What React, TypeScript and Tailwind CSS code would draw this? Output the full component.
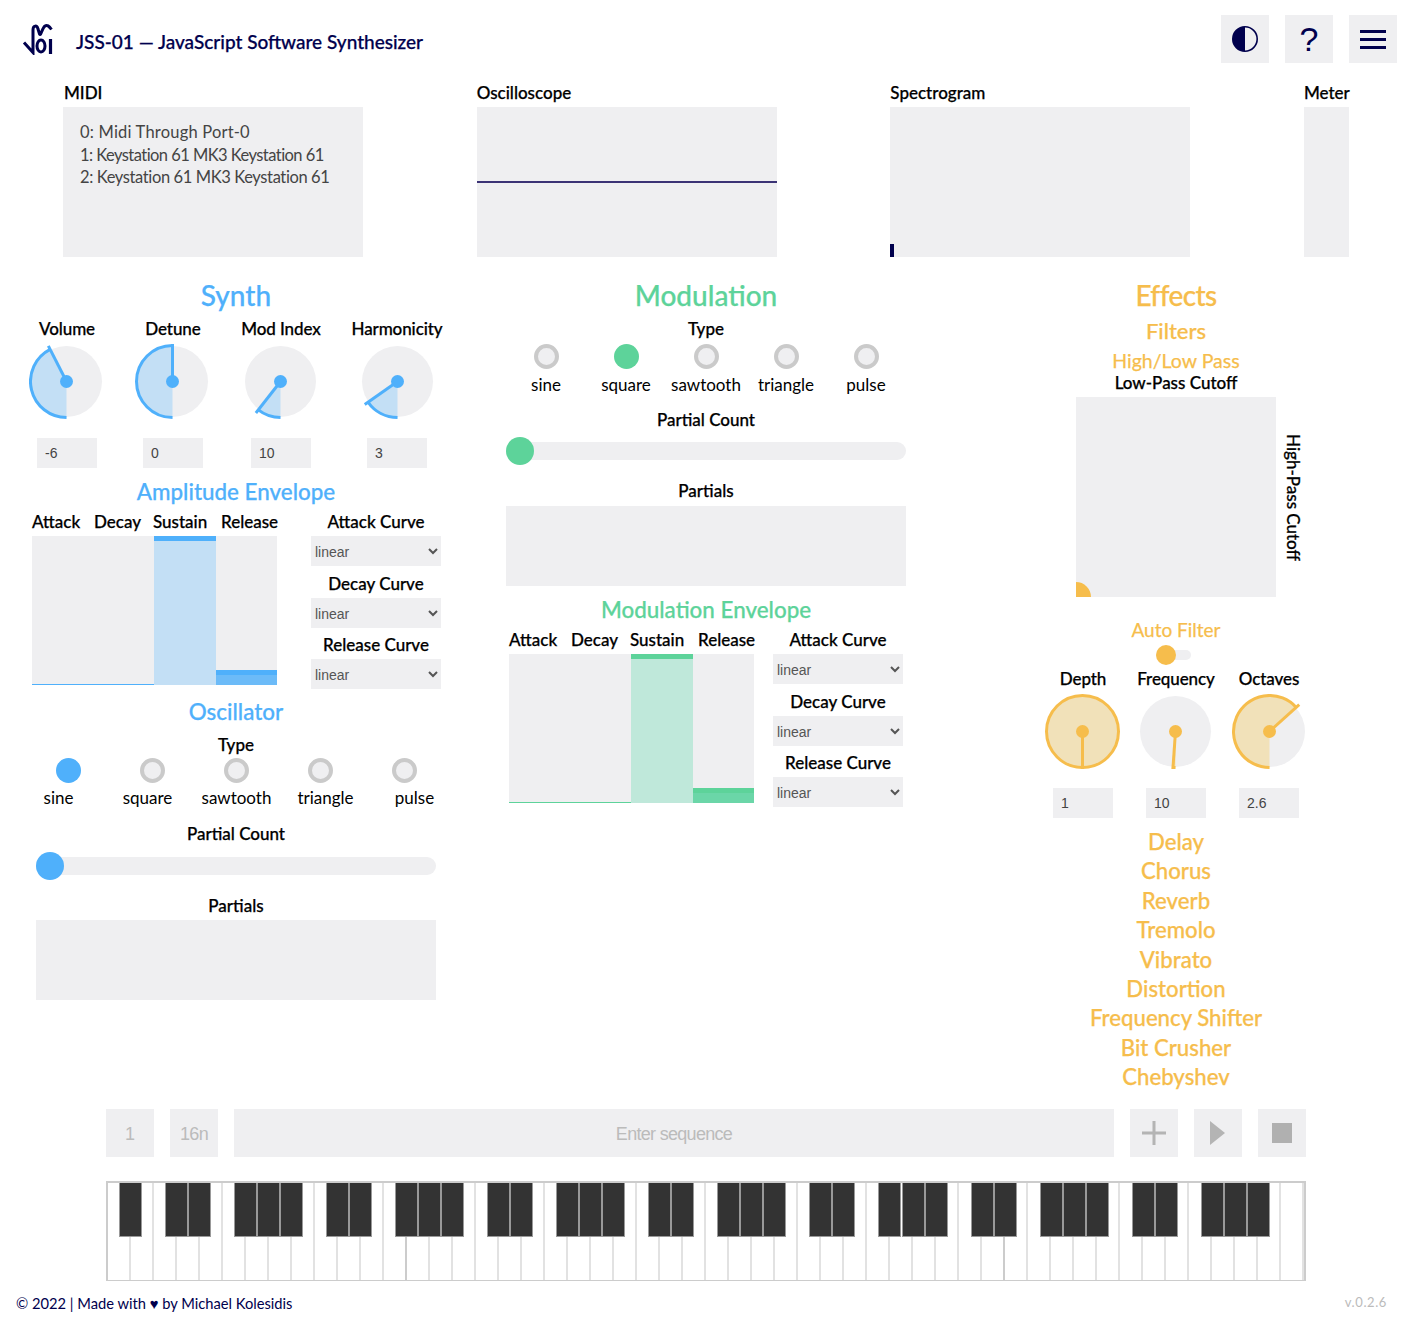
import React from "react";

const BLUE = { main: "#4fb0fb", light: "#c3dff5" };
const GREEN = { main: "#5dd39a", light: "#bfe8da" };
const ORANGE = { main: "#f6bd4c", light: "#f1e1b9" };
type C = typeof BLUE;

function Knob({ angle, c, nudge }: { angle: number; c: C; nudge: boolean }) {
  const R = 36, cx = 37.5, cy = 37.5;
  const a = (angle * Math.PI) / 180;
  const ex = cx - Math.sin(a) * R;
  const ey = cy + Math.cos(a) * R;
  const px = cx - Math.sin(a) * 40;
  const py = cy + Math.cos(a) * 40;
  const full = angle >= 360;
  const large = angle > 180 ? 1 : 0;
  const arc = `M ${cx} ${cy + R} A ${R} ${R} 0 ${large} 1 ${ex} ${ey}`;
  return (
    <svg width="75" height="75" viewBox="0 0 75 75" className={nudge ? "block -ml-[1px]" : "block ml-[1px]"}>
      <circle cx={cx} cy={cy} r="35.5" fill="#efeff1" />
      {full ? (
        <circle cx={cx} cy={cy} r={R} fill={c.light} stroke={c.main} strokeWidth="3" />
      ) : (
        <>
          <path d={`M ${cx} ${cy} L ${cx} ${cy + R} A ${R} ${R} 0 ${large} 1 ${ex} ${ey} Z`} fill={c.light} />
          <path d={arc} fill="none" stroke={c.main} strokeWidth="3" />
        </>
      )}
      <line x1={cx} y1={cy} x2={px} y2={py} stroke={c.main} strokeWidth="3" />
      <circle cx={cx} cy={cy} r="6.5" fill={c.main} />
    </svg>
  );
}

function NumInput({ v }: { v: string }) {
  return (
    <input
      readOnly
      value={v}
      className="block w-[60px] h-[30px] bg-[#efeff1] pl-[8px] text-[14px] text-[#444] font-['Liberation_Sans',sans-serif] outline-none [-webkit-text-stroke:0]"
    />
  );
}

function KnobCol({ label, value, angle, c, w, labelH = "h-[30px]", nudge = true }: { label: string; value: string; angle: number; c: C; w: string; labelH?: string; nudge?: boolean }) {
  return (
    <div className={`${w} flex flex-col items-center`}>
      <div className={`${labelH} flex items-center whitespace-nowrap text-[17px] font-medium tracking-[-0.1px]`}>{label}</div>
      <Knob angle={angle} c={c} nudge={nudge} />
      <div className="mt-[19px]">
        <NumInput v={value} />
      </div>
    </div>
  );
}

function Sel() {
  return (
    <select className="block w-[130px] h-[30px] pt-[1px] bg-[#efeff1] text-[14px] text-[#555] font-['Liberation_Sans',sans-serif] outline-none [-webkit-text-stroke:0]">
      <option>linear</option>
    </select>
  );
}

function Envelope({ c, mid, left, gap }: { c: C; mid: string; left: string; gap: string }) {
  return (
    <div className={`flex ${left} ${gap}`}>
      <div className="w-[245px]">
        <div className="h-[28px] flex items-center whitespace-nowrap text-[17px] font-medium">
          <div className="w-[47px] text-center">Attack</div>
          <div className="w-[45px] ml-[15px] text-center">Decay</div>
          <div className="w-[53px] ml-[14px] text-center">Sustain</div>
          <div className="w-[56px] ml-[15px] text-center">Release</div>
        </div>
        <div className="flex h-[149px] bg-[#efeff1]">
          <div className="w-[122px] flex flex-col justify-end">
            <div className="h-[1px]" style={{ background: c.main }} />
          </div>
          <div className="w-[62px]" style={{ background: c.light }}>
            <div className="h-[5px]" style={{ background: c.main }} />
          </div>
          <div className="w-[61px] flex flex-col justify-end">
            <div className="h-[5px]" style={{ background: c.main }} />
            <div className="h-[10px]" style={{ background: mid }} />
          </div>
        </div>
      </div>
      <div className="w-[130px] text-[17px] font-medium text-center">
        <div className="h-[28px] flex items-center justify-center">Attack Curve</div>
        <Sel />
        <div className="h-[28px] mt-[4px] flex items-center justify-center">Decay Curve</div>
        <Sel />
        <div className="h-[28px] mt-[3px] flex items-center justify-center">Release Curve</div>
        <Sel />
      </div>
    </div>
  );
}

function Radio({ on, c }: { on: boolean; c: C }) {
  return on ? (
    <div className="w-[25px] h-[25px] rounded-full" style={{ background: c.main }} />
  ) : (
    <div className="w-[25px] h-[25px] rounded-full bg-[#efeff1] border-[4px] border-[#cacaca]" />
  );
}

function Slider({ c }: { c: C }) {
  return (
    <div className="relative w-[400px] h-[28px] flex items-center">
      <div className="w-full h-[18px] rounded-full bg-[#efeff1]" />
      <div className="absolute left-0 top-0 w-[28px] h-[28px] rounded-full" style={{ background: c.main }} />
    </div>
  );
}

const Label = ({ children, cls = "h-[28px]" }: { children: React.ReactNode; cls?: string }) => (
  <div className={`${cls} flex items-center justify-center text-[17px] font-medium whitespace-nowrap`}>{children}</div>
);

const TYPES = ["sine", "square", "sawtooth", "triangle", "pulse"];

function Column({ children }: { children: React.ReactNode }) {
  return <div className="w-[470px] shrink-0">{children}</div>;
}

const Title = ({ children, color, cls = "" }: { children: React.ReactNode; color: string; cls?: string }) => (
  <div className={`h-[36px] pb-[2px] flex items-center justify-center text-[28px] font-medium ${cls}`} style={{ color }}>
    {children}
  </div>
);

const Sub = ({ children, color }: { children: React.ReactNode; color: string }) => (
  <div className="h-[32px] flex items-center justify-center text-[22.4px] font-medium" style={{ color }}>
    {children}
  </div>
);

function Synth() {
  return (
    <Column>
      <Title color={BLUE.main}>Synth</Title>
      <div className="flex justify-center">
        <KnobCol w="w-[106px]" label="Volume" value="-6" angle={153} c={BLUE} />
        <KnobCol w="w-[106px]" label="Detune" value="0" angle={180} c={BLUE} />
        <KnobCol w="w-[110px]" label="Mod Index" value="10" angle={38} c={BLUE} />
        <KnobCol w="w-[122px]" label="Harmonicity" value="3" angle={55} c={BLUE} nudge={false} />
      </div>
      <div className="mt-[8px]">
        <Sub color={BLUE.main}>Amplitude Envelope</Sub>
      </div>
      <Envelope c={BLUE} mid="#6cbbf8" left="pl-[31px]" gap="gap-[34px]" />
      <div className="mt-[7px]">
        <Sub color={BLUE.main}>Oscillator</Sub>
      </div>
      <Label cls="h-[30px] pt-[4px]">Type</Label>
      <div className="flex gap-[59px] pl-[55px]">
        {TYPES.map((t, i) => (
          <Radio key={t} on={i === 0} c={BLUE} />
        ))}
      </div>
      <div className="flex h-[30px] items-center pl-[13px] text-[17px] [-webkit-text-stroke:0]">
        {TYPES.map((t) => (
          <div key={t} className="w-[89px] text-center">
            {t}
          </div>
        ))}
      </div>
      <div className="mt-[7px]">
        <Label>Partial Count</Label>
      </div>
      <div className="mt-[4px] flex justify-center">
        <Slider c={BLUE} />
      </div>
      <div className="mt-[12px]">
        <Label>Partials</Label>
      </div>
      <div className="mx-auto w-[400px] h-[80px] bg-[#efeff1]" />
    </Column>
  );
}

function Modulation() {
  return (
    <Column>
      <Title color={GREEN.main}>Modulation</Title>
      <Label cls="h-[30px]">Type</Label>
      <div className="flex justify-center">
        {TYPES.map((t, i) => (
          <div key={t} className="w-[80px] flex justify-center">
            <Radio on={i === 1} c={GREEN} />
          </div>
        ))}
      </div>
      <div className="flex justify-center h-[30px] items-center mt-[1px] text-[17px] [-webkit-text-stroke:0]">
        {TYPES.map((t) => (
          <div key={t} className="w-[80px] text-center">
            {t}
          </div>
        ))}
      </div>
      <div className="mt-[6px]">
        <Label>Partial Count</Label>
      </div>
      <div className="mt-[3px] flex justify-center">
        <Slider c={GREEN} />
      </div>
      <div className="mt-[13px]">
        <Label cls="h-[28px] pb-[2px]">Partials</Label>
      </div>
      <div className="mx-auto w-[400px] h-[80px] bg-[#efeff1]" />
      <div className="mt-[8px]">
        <Sub color={GREEN.main}>Modulation Envelope</Sub>
      </div>
      <Envelope c={GREEN} mid="#6bd6a8" left="pl-[38px]" gap="gap-[19px]" />
    </Column>
  );
}

const FX = ["Delay", "Chorus", "Reverb", "Tremolo", "Vibrato", "Distortion", "Frequency Shifter", "Bit Crusher", "Chebyshev"];

function Effects() {
  return (
    <Column>
      <Title color={ORANGE.main} cls="tracking-[-0.6px]">Effects</Title>
      <div className="mt-[2px] h-[32px] pb-[4px] flex items-center justify-center text-[22px] font-medium text-[#f6bd4c]">Filters</div>
      <div className="h-[27px] pb-[2px] flex items-center justify-center text-[19.5px] text-[#f6bd4c]">High/Low Pass</div>
      <Label cls="h-[16px]">Low-Pass Cutoff</Label>
      <div className="relative mt-[6px] mx-auto w-[200px] h-[200px] bg-[#efeff1] overflow-visible">
        <div className="absolute left-0 bottom-0 w-[15px] h-[15px] rounded-tr-full bg-[#f6bd4c]" />
        <div className="absolute left-[204px] top-[38px] [writing-mode:vertical-rl] text-[17px] font-medium whitespace-nowrap h-[124px] flex items-center justify-center">
          High-Pass Cutoff
        </div>
      </div>
      <div className="mt-[20px] h-[28px] pb-[2px] flex items-center justify-center text-[19px] text-[#f6bd4c]">Auto Filter</div>
      <div className="relative ml-[215px] w-[35px] h-[20px] flex items-center">
        <div className="w-full h-[10px] rounded-full bg-[#efeff1]" />
        <div className="absolute left-0 top-0 w-[20px] h-[20px] rounded-full bg-[#f6bd4c]" />
      </div>
      <div className="flex justify-center">
        <KnobCol w="w-[93px]" labelH="h-[29px] pb-[1px]" label="Depth" value="1" angle={360} c={ORANGE} />
        <KnobCol w="w-[93px]" labelH="h-[29px] pb-[1px]" label="Frequency" value="10" angle={4} c={ORANGE} />
        <KnobCol w="w-[93px]" labelH="h-[29px] pb-[1px]" label="Octaves" value="2.6" angle={228} c={ORANGE} nudge={false} />
      </div>
      <div className="mt-[9px]">
        {FX.map((f) => (
          <div key={f} className="h-[29.4px] flex items-center justify-center text-[22.2px] font-medium text-[#f6bd4c]">
            {f}
          </div>
        ))}
      </div>
    </Column>
  );
}

const BLACK_OFFSETS = (() => {
  const out: number[] = [1];
  for (let o = 0; o < 7; o++) {
    const base = 2 + o * 7;
    [1, 2, 4, 5, 6].forEach((n) => out.push(base + n));
  }
  return out;
})();

function Piano() {
  return (
    <div className="relative w-[1200px] h-[100px] ml-[106px] border-x-2 border-t-2 border-b-[1.5px] border-[#cccccc] flex overflow-hidden">
      {Array.from({ length: 52 }).map((_, i) => (
        <div
          key={i}
          className={`flex-1 border-r-2 last:border-r-0 ${i === 12 || i === 38 ? "border-[#cccccc]" : "border-[#e2e2e2]"}`}
        />
      ))}
      {BLACK_OFFSETS.map((k) => (
        <div
          key={k}
          className="absolute top-[-1px] h-[55px] w-[23px] bg-[#333333] border border-[#999999]"
          style={{ left: k * 23.02 - 12.2 }}
        />
      ))}
    </div>
  );
}

function Logo() {
  return (
    <svg width="32" height="32" viewBox="0 0 32 32" className="block">
      <g fill="none" stroke="#00004d" strokeWidth="3">
        <path d="M2 19.5 L11 29.5 V7 C11 2 15 2 16 6 L17.5 11 C19 13.5 20 5 23 3 C25 1.5 27 3 29.5 6.5" />
        <ellipse cx="19" cy="23" rx="4" ry="6" />
        <path d="M28.5 16 V31" strokeWidth="3.2" />
      </g>
    </svg>
  );
}

export default function App() {
  return (
    <div className="w-[1413px] h-[1331px] bg-white text-black font-['Lato','Noto_Sans',sans-serif] overflow-hidden relative [-webkit-text-stroke:0.25px]">
      <header className="h-[78px] flex items-start pt-[15px] pl-[22px] pr-[16px]">
        <div className="mt-[8px]">
          <Logo />
        </div>
        <h1 className="ml-[22px] mt-[13px] leading-[28px] text-[19px] font-medium text-[#00004d] whitespace-nowrap">
          JSS-01 — JavaScript Software Synthesizer
        </h1>
        <div className="ml-auto flex gap-[16px] [-webkit-text-stroke:0]">
          <button className="w-[48px] h-[48px] bg-[#efeff1] flex items-center justify-center">
            <svg width="28" height="28" viewBox="0 0 28 28">
              <circle cx="14" cy="14" r="12.2" fill="none" stroke="#00004d" strokeWidth="1.6" />
              <path d="M14 1.8 A12.2 12.2 0 0 0 14 26.2 Z" fill="#00004d" />
            </svg>
          </button>
          <button className="w-[48px] h-[48px] bg-[#efeff1] flex items-center justify-center text-[34px] text-[#00004d] font-['Liberation_Sans',sans-serif] leading-none">
            ?
          </button>
          <button className="w-[48px] h-[48px] bg-[#efeff1] flex flex-col items-center justify-center gap-[5px]">
            <span className="block w-[26px] h-[3px] bg-[#00004d]" />
            <span className="block w-[26px] h-[3px] bg-[#00004d]" />
            <span className="block w-[26px] h-[3px] bg-[#00004d]" />
          </button>
        </div>
      </header>

      <section className="flex justify-between pl-[63px] pr-[64px] h-[179px]">
        <div className="w-[300px]">
          <div className="h-[29px] flex items-center text-[17px] font-medium pl-[1px] pt-[1px]">MIDI</div>
          <div className="h-[150px] bg-[#efeff1] pl-[17px] pt-[14px] text-[16.5px] text-[#444] leading-[22.5px] whitespace-nowrap [-webkit-text-stroke:0]">
            <div className="tracking-[0.2px]">0: Midi Through Port-0</div>
            <div className="tracking-[-0.55px]">1: Keystation 61 MK3 Keystation 61</div>
            <div className="tracking-[-0.38px]">2: Keystation 61 MK3 Keystation 61</div>
          </div>
        </div>
        <div className="w-[300px]">
          <div className="h-[29px] flex items-center text-[17px] font-medium pt-[1px]">Oscilloscope</div>
          <div className="h-[150px] bg-[#efeff1] flex flex-col justify-center">
            <div className="h-[2px] bg-[#3b3375]" />
          </div>
        </div>
        <div className="w-[300px]">
          <div className="h-[29px] flex items-center text-[17px] font-medium pt-[1px]">Spectrogram</div>
          <div className="h-[150px] bg-[#efeff1] flex flex-col justify-end">
            <div className="w-[4px] h-[13px] bg-[#00004d]" />
          </div>
        </div>
        <div className="w-[45px]">
          <div className="h-[29px] flex items-center text-[17px] font-medium pt-[1px]">Meter</div>
          <div className="h-[150px] bg-[#efeff1]" />
        </div>
      </section>

      <main className="flex pl-[1px] mt-[21px] h-[814px]">
        <Synth />
        <Modulation />
        <Effects />
      </main>

      <section className="mt-[17px] flex gap-[16px] pl-[106px] text-[18px] text-[#bbbbbb] font-['Liberation_Sans',sans-serif] [-webkit-text-stroke:0]">
        <div className="w-[48px] h-[48px] pt-[2px] bg-[#efeff1] flex items-center justify-center">1</div>
        <div className="w-[48px] h-[48px] pt-[2px] bg-[#efeff1] flex items-center justify-center tracking-[-0.7px]">16n</div>
        <div className="w-[880px] h-[48px] pt-[2px] bg-[#efeff1] flex items-center justify-center tracking-[-0.7px]">Enter sequence</div>
        <div className="w-[48px] h-[48px] bg-[#efeff1] flex items-center justify-center">
          <svg width="24" height="24" viewBox="0 0 24 24">
            <path d="M12 0 V24 M0 12 H24" stroke="#b4b4b4" strokeWidth="3" />
          </svg>
        </div>
        <div className="w-[48px] h-[48px] bg-[#efeff1] flex items-center justify-center">
          <svg width="24" height="24" viewBox="0 0 24 24">
            <path d="M4 0 L19 12 L4 24 Z" fill="#b4b4b4" />
          </svg>
        </div>
        <div className="w-[48px] h-[48px] bg-[#efeff1] flex items-center justify-center">
          <div className="w-[20px] h-[20px] bg-[#b0b0b0]" />
        </div>
      </section>

      <div className="mt-[24px]">
        <Piano />
      </div>

      <footer className="mt-[12px] flex items-center justify-between pl-[16px] pr-[26px] h-[20px] [-webkit-text-stroke:0]">
        <div className="text-[14.7px] text-[#00004d]">© 2022 | Made with ♥ by Michael Kolesidis</div>
        <div className="text-[13px] text-[#bbbbbb] tracking-[0.6px]">v.0.2.6</div>
      </footer>
    </div>
  );
}
